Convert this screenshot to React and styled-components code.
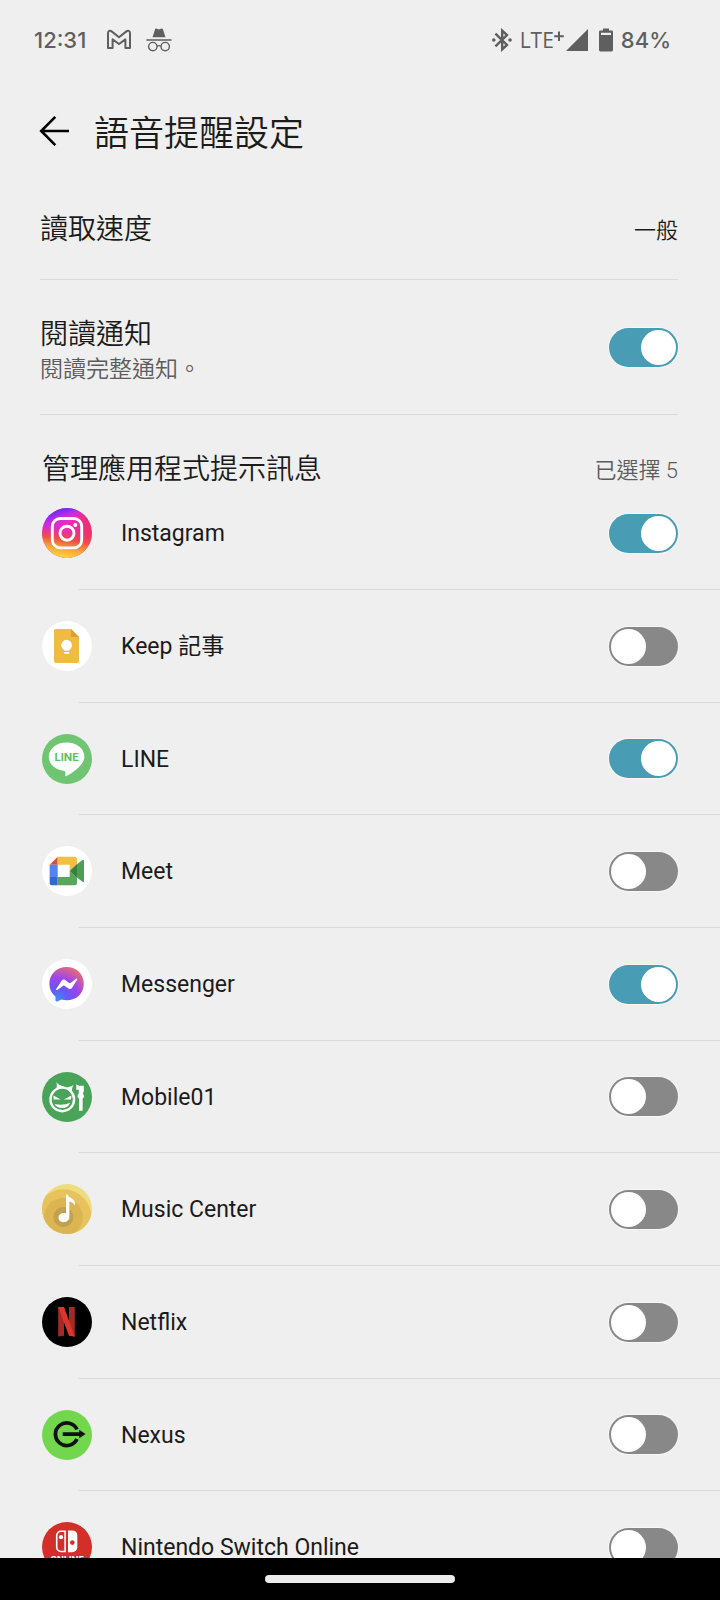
import React, { useId, useState } from "react";
import styled, { createGlobalStyle } from "styled-components";

const GlobalStyle = createGlobalStyle`
  *, *::before, *::after { box-sizing: border-box; }
  body {
    margin: 0;
    background: #efefef;
    color: #1b1b1b;
    font-family: Roboto, "Noto Sans CJK TC", sans-serif;
  }
`;

const Screen = styled.div`
  display: flex;
  flex-direction: column;
  height: 100vh;
`;

const StatusBar = styled.div`
  flex: none;
  display: flex;
  align-items: center;
  justify-content: space-between;
  height: 80px;
  padding: 0 49px 0 34px;
  color: #5f5f5f;
  font-family: Inter, sans-serif;
  font-size: 22px;
  font-weight: 500;

  svg { display: block; }
`;

const StatusGroup = styled.div`
  display: flex;
  align-items: center;
  gap: ${(p) => p.$gap}px;
`;

const Network = styled.span`
  display: flex;
  align-items: center;
  font-family: "Open Sans", sans-serif;
  font-size: 21px;
  font-weight: 400;
`;

const Content = styled.main`
  flex: 1;
  min-height: 0;
  overflow-y: auto;
  scrollbar-width: none;
`;

const Header = styled.header`
  display: flex;
  align-items: center;
  gap: 22px;
  height: 100px;
  padding: 4px 38px 0;
`;

const BackButton = styled.button`
  display: flex;
  padding: 0;
  border: 0;
  background: none;
  color: #000;
  cursor: pointer;
`;

const Title = styled.h1`
  margin: 0;
  padding-top: 5px;
  font-size: 35px;
  font-weight: 350;
  line-height: 48px;
`;

const Setting = styled.div`
  display: flex;
  align-items: center;
  justify-content: space-between;
  height: ${(p) => p.$height}px;
  margin: 0 42px 0 40px;
  border-bottom: 1px solid #dadada;
`;

const SettingText = styled.div`
  padding-top: 10px;
`;

const SettingName = styled.label`
  display: block;
  font-size: 28px;
  font-weight: 350;
  line-height: 36px;
`;

const SettingNote = styled.p`
  margin: 0;
  color: #5c5c5c;
  font-size: 23px;
  font-weight: 350;
  line-height: 34px;
`;

const ValueButton = styled.button`
  padding: 2px 0 0;
  border: 0;
  background: none;
  color: inherit;
  font: inherit;
  font-size: 22px;
  font-weight: 350;
  line-height: 36px;
  cursor: pointer;
`;

const SectionHeader = styled.div`
  display: flex;
  align-items: center;
  justify-content: space-between;
  padding: 36px 42px 19px;
`;

const SectionTitle = styled.h2`
  margin: 0;
  font-size: 28px;
  font-weight: 350;
  line-height: 38px;
`;

const Count = styled.span`
  padding-top: 2px;
  color: #5c5c5c;
  font-size: 22px;
  font-weight: 350;
  line-height: 36px;
`;

const AppList = styled.ul`
  margin: 0;
  padding: 0;
  list-style: none;
`;

const AppItem = styled.li`
  &:not(:last-child)::after {
    content: "";
    display: block;
    height: 1px;
    margin-left: 79px;
    background: #dadada;
  }
`;

const AppRow = styled.label`
  display: flex;
  align-items: center;
  padding: 31px 42px;
  height: 112px;

  ${AppItem}:nth-child(3n) & { height: 111px; }
  ${AppItem}:first-child & { height: 81px; padding-top: 0; }
`;

const AppName = styled.span`
  flex: 1;
  margin-left: 29px;
  padding-top: 2px;
  font-size: 23px;
  line-height: 32px;
`;

const Switch = styled.input.attrs({ type: "checkbox", role: "switch" })`
  appearance: none;
  flex: none;
  display: flex;
  justify-content: flex-start;
  width: 69px;
  height: 39px;
  margin: 0;
  padding: 2px;
  border-radius: 20px;
  background: #888;
  box-shadow: 0 0 0 1px #f7f7f7;
  cursor: pointer;

  &::before {
    content: "";
    width: 35px;
    height: 35px;
    border-radius: 50%;
    background: #fff;
  }

  &:checked {
    justify-content: flex-end;
    background: #489cb4;
  }
`;

const AppIcon = styled.svg.attrs({ viewBox: "0 0 50 50", "aria-hidden": true })`
  flex: none;
  width: 50px;
  height: 50px;
  border-radius: 50%;
`;

const NavBar = styled.nav`
  flex: none;
  display: flex;
  align-items: center;
  justify-content: center;
  height: 42px;
  background: #000;
`;

const HomeHandle = styled.button`
  width: 190px;
  height: 8px;
  padding: 0;
  border: 0;
  border-radius: 4px;
  background: #ececec;
`;

function Toggle({ initial, ...rest }) {
  const [on, setOn] = useState(initial);
  return <Switch checked={on} onChange={() => setOn(!on)} {...rest} />;
}

const InstagramIcon = () => (
  <AppIcon>
    <defs>
      <linearGradient id="igBase" x1="0.1" y1="0.3" x2="0.9" y2="0.5">
        <stop offset="0" stopColor="#d32be0" />
        <stop offset="0.5" stopColor="#e92dc0" />
        <stop offset="1" stopColor="#ec2f72" />
      </linearGradient>
      <linearGradient id="igWarm" x1="0.45" y1="1" x2="0.55" y2="0.4">
        <stop offset="0" stopColor="#fbd83c" />
        <stop offset="0.3" stopColor="#f6a53a" />
        <stop offset="0.6" stopColor="#ee5142" />
        <stop offset="1" stopColor="#ec2f72" stopOpacity="0" />
      </linearGradient>
      <linearGradient id="igCool" x1="0.3" y1="0" x2="0.4" y2="0.3">
        <stop offset="0" stopColor="#5a2bf5" />
        <stop offset="0.4" stopColor="#962bf0" />
        <stop offset="1" stopColor="#d32be0" stopOpacity="0" />
      </linearGradient>
    </defs>
    <rect width="50" height="50" fill="url(#igBase)" />
    <rect width="50" height="50" fill="url(#igWarm)" />
    <rect width="50" height="50" fill="url(#igCool)" />
    <g fill="none" stroke="#fff" strokeWidth="2.9">
      <rect x="10.3" y="10.5" width="29.4" height="29.4" rx="8" />
      <circle cx="25" cy="25.2" r="7" />
    </g>
    <circle cx="33.3" cy="17" r="2" fill="#fff" />
  </AppIcon>
);

const KeepIcon = () => (
  <AppIcon>
    <rect width="50" height="50" fill="#fff" />
    <path d="M14 8H29L37 16V40a2 2 0 0 1-2 2H14a2 2 0 0 1-2-2V10a2 2 0 0 1 2-2Z" fill="#efbb41" />
    <path d="M29 8L37 16H29Z" fill="#e29a35" />
    <circle cx="24.6" cy="24.2" r="5.4" fill="#fff" />
    <path d="M22 27H27.2V29.6H22ZM22 31H27.2V32.8H22Z" fill="#fff" />
  </AppIcon>
);

const LineIcon = () => (
  <AppIcon>
    <rect width="50" height="50" fill="#6fc571" />
    <path d="M24.6 8.5C34.5 8.5 42.4 14.6 42.4 22.5C42.4 28.5 37 33.5 31 38C28.3 40 25.7 41.6 24 42.2C22.8 42.5 23.3 40.5 23.4 39.3C23.6 37.5 23 37 21.5 36.7C13 35.7 6.8 30 6.8 22.8C6.8 14.6 14.8 8.5 24.6 8.5Z" fill="#fff" />
    <text x="24.7" y="27.4" textAnchor="middle" fontFamily="Inter, sans-serif" fontSize="11" fontWeight="700" fill="#5fbf62">LINE</text>
  </AppIcon>
);

const MeetIcon = () => (
  <AppIcon>
    <rect width="50" height="50" fill="#fff" />
    <path d="M15.7 10.7V18.7H7.7Z" fill="#d94f3f" />
    <path d="M7.7 18.7H15.7V31H7.7Z" fill="#5383ec" />
    <path d="M7.7 31H15.7V39.3H9.7a2 2 0 0 1-2-2Z" fill="#3267d1" />
    <path d="M15.7 10.7H33a2 2 0 0 1 2 2V18L27.7 25V18.7H15.7Z" fill="#f1bf42" />
    <path d="M15.7 31H27.7V25L35 32V37.3a2 2 0 0 1-2 2H15.7Z" fill="#58a65c" />
    <path d="M27.7 25L35 18V32Z" fill="#397f44" />
    <path d="M35 18.3L40.5 14C41.3 13.4 42 13.8 42 14.8V35.2C42 36.2 41.3 36.5 40.5 35.8L35 31.6Z" fill="#4c9f55" />
  </AppIcon>
);

const MessengerIcon = () => (
  <AppIcon>
    <defs>
      <radialGradient id="msgFill" cx="0.2" cy="1" r="1.1">
        <stop offset="0" stopColor="#3596f8" />
        <stop offset="0.35" stopColor="#6a55f6" />
        <stop offset="0.62" stopColor="#9a45ee" />
        <stop offset="1" stopColor="#ee6a72" />
      </radialGradient>
    </defs>
    <rect width="50" height="50" fill="#fff" />
    <path d="M24.6 8C34.5 8 41.8 15.2 41.8 24.7C41.8 34.3 34.5 41.3 24.6 41.3C22.8 41.3 21 41.1 19.5 40.6L15.8 42.3C14.3 42.9 13.5 42.3 13.5 41V37.7C9.5 34.3 7.4 29.8 7.4 24.7C7.4 15.2 14.7 8 24.6 8Z" fill="url(#msgFill)" />
    <path d="M14.2 30L19.6 21.7C20.5 20.4 22 20.2 23.2 21L27.2 24C27.6 24.2 28 24.2 28.4 24L34.2 19.7C34.9 19.2 35.6 19.8 35.2 20.5L30 28.9C29.2 30.1 27.6 30.4 26.4 29.6L22.4 26.7C22 26.4 21.6 26.4 21.2 26.7L15.2 30.9C14.5 31.4 13.8 30.8 14.2 30Z" fill="#fff" />
  </AppIcon>
);

const Mobile01Icon = () => (
  <AppIcon>
    <rect width="50" height="50" fill="#49a359" />
    <circle cx="20.3" cy="27.4" r="11.8" fill="none" stroke="#fff" strokeWidth="2.4" />
    <path d="M14.3 10.2C16.5 13 19.5 14 22.3 14.2L17 17L13.5 18.5C15 15.8 15.2 13 14.3 10.2ZM31.5 12.8C30.5 14 29 14.6 27.2 14.8L24.5 16L30 20.2C29.8 17.5 30.3 15 31.5 12.8Z" fill="#fff" />
    <path d="M11.4 23.4L18.8 27.4L11.6 27.6ZM29.4 23.4L21.8 27.4L29 27.6ZM12.6 32C18 33.4 24 32.8 28.2 30.8C27 34.3 24 36 20.4 36C16.7 36 13.7 34.6 12.6 32Z" fill="#fff" />
    <path d="M34.3 12.2L37 13.8H41.8V19.3L40.8 21.4C42.6 23.3 42.2 25.6 40.6 26.4V38.8H37V26.4C35.1 25.5 34.9 23.4 36.8 21.4L36.7 17.8H34.3Z" fill="#fff" />
  </AppIcon>
);

const MusicIcon = () => (
  <AppIcon>
    <rect width="50" height="50" fill="#eedc7f" />
    <circle cx="21.4" cy="33.3" r="28" fill="#e8c25d" />
    <circle cx="21.4" cy="33.3" r="19.4" fill="#dab552" />
    <circle cx="21.4" cy="33" r="10" fill="#c3a04b" />
    <path d="M24 11.6C24 10.2 25.4 10.2 25.9 11.3C27.4 14.2 31.5 14.3 33 18.4V21.5C31.5 19.3 29.5 18 27.4 17.3V33C27.4 36.2 24.5 38.2 21.4 38.2C18.6 38.2 16.5 36.5 16.5 33.8C16.5 31 19 29 21.8 29C22.6 29 23.4 29.1 24 29.4Z" fill="#fff" />
  </AppIcon>
);

const NetflixIcon = () => (
  <AppIcon>
    <rect width="50" height="50" fill="#000" />
    <path d="M16.2 10H22V38.8L16.2 39.4ZM27 10H32.8V39.4L27 38.8Z" fill="#a32a25" />
    <path d="M16.2 10H22L32.8 39.4L27 38.8Z" fill="#dc352c" />
  </AppIcon>
);

const NexusIcon = () => (
  <AppIcon>
    <rect width="50" height="50" fill="#73d74e" />
    <path d="M35 19.5A11.3 11.3 0 1 0 35 29" fill="none" stroke="#111" strokeWidth="3.8" />
    <path d="M20.7 22.2H37.2V19.8L43.6 24L37.2 28.2V26H20.7Z" fill="#111" />
  </AppIcon>
);

const NintendoIcon = () => (
  <AppIcon>
    <rect width="50" height="50" fill="#d42e28" />
    <path d="M23.1 9.2H19A4.3 4.3 0 0 0 14.7 13.5V25.2A4.3 4.3 0 0 0 19 29.5H23.1Z" fill="none" stroke="#fff" strokeWidth="1.6" />
    <circle cx="19" cy="15.2" r="2.1" fill="#fff" />
    <path d="M26 8.4H30.3A5 5 0 0 1 35.3 13.4V25.3A5 5 0 0 1 30.3 30.3H26Z" fill="#fff" />
    <circle cx="30.3" cy="20.6" r="2.3" fill="#d42e28" />
    <text x="25" y="40.5" textAnchor="middle" fontFamily="Inter, sans-serif" fontSize="9" fontWeight="700" fill="#fff">ONLINE</text>
  </AppIcon>
);

const GmailGlyph = () => (
  <svg width="26" height="22" viewBox="0 0 26 22" fill="none" stroke="currentColor" strokeWidth="2" strokeLinejoin="round" aria-hidden="true">
    <path d="M2 4.2C2 1.8 4 1.2 5.6 2.4L13 8.2L20.4 2.4C22 1.2 24 1.8 24 4.2V19H19.4V10.4L13 15L6.6 10.4V19H2Z" />
  </svg>
);

const IncognitoGlyph = () => (
  <svg width="26" height="24" viewBox="0 0 26 24" aria-hidden="true">
    <path d="M6.5 9.3L9 1.4C9.3 0.5 9.8 0.2 10.4 0.5L13 1.4L15.6 0.5C16.2 0.2 16.7 0.5 17 1.4L19.5 9.3ZM0.5 11.2H25.5V12.8H0.5Z" fill="currentColor" />
    <g fill="none" stroke="currentColor" strokeWidth="1.4">
      <circle cx="6.8" cy="18.6" r="4.2" />
      <circle cx="19.2" cy="18.6" r="4.2" />
      <path d="M11 18.2Q13 17 15 18.2" />
    </g>
  </svg>
);

const BluetoothGlyph = () => (
  <svg width="20" height="24" viewBox="0 0 20 24" aria-hidden="true">
    <path d="M3.4 5.6L15 17L10.2 21.4V2.6L15 7L3.4 18.4" fill="none" stroke="currentColor" strokeWidth="2.4" />
    <circle cx="1.8" cy="12" r="1.8" fill="currentColor" />
    <circle cx="18" cy="12" r="1.8" fill="currentColor" />
  </svg>
);

const SignalGlyph = () => (
  <svg width="22" height="22" viewBox="0 0 22 22" aria-hidden="true">
    <path d="M22 0V22H0Z" fill="currentColor" />
  </svg>
);

const BatteryGlyph = () => (
  <svg width="14" height="24" viewBox="0 0 14 24" aria-hidden="true">
    <path fillRule="evenodd" d="M4 0.5H10V2.6H12.5A1.4 1.4 0 0 1 14 4V22A1.4 1.4 0 0 1 12.6 23.4H1.4A1.4 1.4 0 0 1 0 22V4A1.4 1.4 0 0 1 1.5 2.6H4ZM2 4.8V7H12V4.8Z" fill="currentColor" />
  </svg>
);

const PlusGlyph = () => (
  <svg width="10" height="20" viewBox="0 0 10 20" aria-hidden="true">
    <path d="M5 1.4V11M0.2 6.2H9.8" stroke="currentColor" strokeWidth="2" />
  </svg>
);

const ArrowGlyph = () => (
  <svg width="34" height="34" viewBox="0 0 34 34" fill="none" stroke="currentColor" strokeWidth="2.6" aria-hidden="true">
    <path d="M31 16H3.5M17.3 1.8L3.2 16L17.3 30.2" />
  </svg>
);

const apps = [
  { name: "Instagram", Icon: InstagramIcon, on: true },
  { name: "Keep 記事", Icon: KeepIcon, on: false },
  { name: "LINE", Icon: LineIcon, on: true },
  { name: "Meet", Icon: MeetIcon, on: false },
  { name: "Messenger", Icon: MessengerIcon, on: true },
  { name: "Mobile01", Icon: Mobile01Icon, on: false },
  { name: "Music Center", Icon: MusicIcon, on: false },
  { name: "Netflix", Icon: NetflixIcon, on: false },
  { name: "Nexus", Icon: NexusIcon, on: false },
  { name: "Nintendo Switch Online", Icon: NintendoIcon, on: false },
];

export default function App() {
  const speedId = useId();
  const readId = useId();
  return (
    <Screen lang="zh-Hant">
      <GlobalStyle />
      <StatusBar>
        <StatusGroup $gap={14}>
          <StatusGroup $gap={20}>
            <span>12:31</span>
            <GmailGlyph />
          </StatusGroup>
          <IncognitoGlyph />
        </StatusGroup>
        <StatusGroup $gap={11}>
          <StatusGroup $gap={8}>
            <BluetoothGlyph />
            <StatusGroup $gap={2}>
              <Network>LTE<PlusGlyph /></Network>
              <SignalGlyph />
            </StatusGroup>
          </StatusGroup>
          <StatusGroup $gap={8}>
            <BatteryGlyph />
            <span>84%</span>
          </StatusGroup>
        </StatusGroup>
      </StatusBar>
      <Content>
        <Header>
          <BackButton aria-label="返回"><ArrowGlyph /></BackButton>
          <Title>語音提醒設定</Title>
        </Header>
        <Setting $height={100}>
          <SettingName htmlFor={speedId}>讀取速度</SettingName>
          <ValueButton id={speedId}>一般</ValueButton>
        </Setting>
        <Setting $height={135}>
          <SettingText>
            <SettingName htmlFor={readId}>閱讀通知</SettingName>
            <SettingNote>閱讀完整通知。</SettingNote>
          </SettingText>
          <Toggle id={readId} initial />
        </Setting>
        <SectionHeader>
          <SectionTitle>管理應用程式提示訊息</SectionTitle>
          <Count>已選擇 5</Count>
        </SectionHeader>
        <AppList>
          {apps.map(({ name, Icon, on }) => (
            <AppItem key={name}>
              <AppRow>
                <Icon />
                <AppName>{name}</AppName>
                <Toggle initial={on} />
              </AppRow>
            </AppItem>
          ))}
        </AppList>
      </Content>
      <NavBar>
        <HomeHandle aria-label="主畫面" />
      </NavBar>
    </Screen>
  );
}
